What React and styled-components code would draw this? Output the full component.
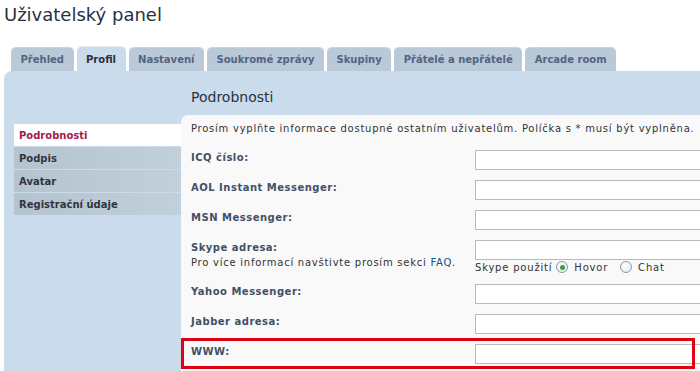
import React from 'react';
import styled, { createGlobalStyle } from 'styled-components';

const GlobalStyle = createGlobalStyle`
  html, body {
    margin: 0;
    padding: 0;
    background: #ffffff;
    overflow: hidden;
  }
  body {
    font-family: "DejaVu Sans", Verdana, sans-serif;
    color: #333333;
  }
`;

const Page = styled.div`
  width: 780px;
  padding-left: 4px;
`;

const Title = styled.h1`
  margin: 5px 0 0;
  font-size: 18px;
  line-height: 20px;
  font-weight: normal;
  color: #28313f;
`;

const TabBar = styled.ul`
  display: flex;
  align-items: flex-end;
  gap: 3px;
  list-style: none;
  margin: 21px 0 0;
  padding: 0 0 0 7px;
  height: 25px;
`;

const Tab = styled.li`
  height: ${p => (p.$active ? '25px' : '24px')};
  padding: 0 9.5px;
  display: flex;
  align-items: center;
  box-sizing: border-box;
  padding-top: ${p => (p.$active ? '1px' : '0')};
  border-radius: 5px 5px 0 0;
  background: ${p => (p.$active ? '#cadceb' : '#b9c9d8')};
  border-top: 1px solid ${p => (p.$active ? '#e4edf5' : '#c9d6e2')};
  font-size: 10px;
  font-weight: bold;
  color: ${p => (p.$active ? '#28313f' : '#536482')};
  white-space: nowrap;
`;

const Panel = styled.div`
  display: flex;
  background: #cadceb;
  border-radius: 8px 0 0 0;
  padding-left: 10px;
  height: 300px;
`;

const Menu = styled.ul`
  list-style: none;
  margin: 53px 0 0;
  padding: 0;
  width: 167px;
  flex-shrink: 0;
`;

const MenuItem = styled.li`
  height: 22px;
  margin-bottom: 1px;
  padding-left: 5px;
  display: flex;
  align-items: center;
  font-size: 10px;
  font-weight: bold;
  color: ${p => (p.$active ? '#a8174b' : '#2f3640')};
  background: ${p =>
    p.$active ? '#ffffff' : 'linear-gradient(to right, #b5c3cf, #c2d0dc)'};
`;

const Main = styled.div`
  flex: 1;
  display: flex;
  flex-direction: column;
`;

const Heading = styled.h2`
  margin: 0;
  padding: 17px 0 9px 10px;
  font-size: 14px;
  line-height: 18px;
  font-weight: normal;
  color: #28313f;
`;

const Content = styled.div`
  flex: 1;
  background: #f9f9f9;
  border-radius: 7px 0 0 0;
`;

const Intro = styled.p`
  margin: 0;
  padding: 7px 0 9px 10px;
  font-size: 10px;
  line-height: 14px;
  letter-spacing: 0.75px;
  white-space: nowrap;
  color: #333333;
`;

const Row = styled.div`
  position: relative;
  display: grid;
  grid-template-columns: 294px 260px;
  padding: 5px 0;
`;

const Label = styled.div`
  padding-left: 10px;
  font-size: 10px;
  line-height: 15px;
`;

const LabelText = styled.span`
  font-weight: bold;
  letter-spacing: 0.5px;
  color: #425067;
`;

const Explain = styled.div`
  font-size: 10px;
  line-height: 15px;
  letter-spacing: 0.75px;
  white-space: nowrap;
  color: #333333;
`;

const Link = styled.a`
  color: #105289;
  text-decoration: none;
`;

const Input = styled.input`
  display: block;
  width: 100%;
  height: 20px;
  box-sizing: border-box;
  margin: 0;
  border: 1px solid #b4bac0;
  background: #ffffff;
  font-size: 11px;
`;

const RadioLine = styled.div`
  display: flex;
  align-items: center;
  height: 14px;
  font-size: 10px;
  letter-spacing: 0.8px;
  color: #333333;
  white-space: nowrap;
`;

const Radio = styled.span`
  width: 12px;
  height: 12px;
  box-sizing: border-box;
  border-radius: 50%;
  border: 1px solid #8c9aa6;
  background: radial-gradient(circle at 40% 35%, #ffffff, #dfe3e7);
  margin: 0 6px 0 ${p => (p.$gap ? '12px' : '4px')};
  display: inline-flex;
  align-items: center;
  justify-content: center;
  &::after {
    content: '';
    width: 5px;
    height: 5px;
    border-radius: 50%;
    background: ${p => (p.$checked ? '#3aa03a' : 'transparent')};
  }
`;

const Highlight = styled.div`
  position: absolute;
  top: -1px;
  left: 0;
  width: 514px;
  height: 31px;
  box-sizing: border-box;
  border: 3px solid #e1000f;
  pointer-events: none;
`;

const tabs = [
  'Přehled',
  'Profil',
  'Nastavení',
  'Soukromé zprávy',
  'Skupiny',
  'Přátelé a nepřátelé',
  'Arcade room',
];

const menu = ['Podrobnosti', 'Podpis', 'Avatar', 'Registrační údaje'];

const fields = [
  { label: 'ICQ číslo:' },
  { label: 'AOL Instant Messenger:' },
  { label: 'MSN Messenger:' },
  { label: 'Skype adresa:', skype: true },
  { label: 'Yahoo Messenger:' },
  { label: 'Jabber adresa:' },
  { label: 'WWW:', marked: true },
];

const App = () => {
  return (
    <Page>
      <GlobalStyle />
      <Title>Uživatelský panel</Title>
      <TabBar>
        {tabs.map(t => (
          <Tab key={t} $active={t === 'Profil'}>{t}</Tab>
        ))}
      </TabBar>
      <Panel>
        <Menu>
          {menu.map((m, i) => (
            <MenuItem key={m} $active={i === 0}>{m}</MenuItem>
          ))}
        </Menu>
        <Main>
          <Heading>Podrobnosti</Heading>
          <Content>
            <Intro>
              Prosím vyplňte informace dostupné ostatním uživatelům. Políčka s * musí být vyplněna.
            </Intro>
            {fields.map(f => (
              <Row key={f.label}>
                <Label>
                  <LabelText>{f.label}</LabelText>
                  {f.skype && (
                    <Explain>
                      Pro více informací navštivte prosím sekci <Link href="#">FAQ</Link>.
                    </Explain>
                  )}
                </Label>
                <div>
                  <Input type="text" />
                  {f.skype && (
                    <RadioLine>
                      Skype použití
                      <Radio $checked />
                      Hovor
                      <Radio $gap />
                      Chat
                    </RadioLine>
                  )}
                </div>
                {f.marked && <Highlight />}
              </Row>
            ))}
          </Content>
        </Main>
      </Panel>
    </Page>
  );
};

export default App;
